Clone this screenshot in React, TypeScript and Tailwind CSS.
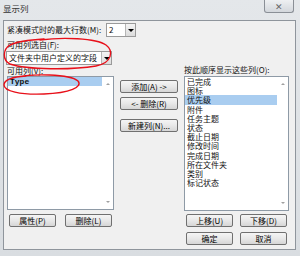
import React from "react";

const leftItems = ["Type"];
const rightItems = [
  "已完成",
  "图标",
  "优先级",
  "附件",
  "任务主题",
  "状态",
  "截止日期",
  "修改时间",
  "完成日期",
  "所在文件夹",
  "类别",
  "标记状态",
];

function Btn({ children, className = "" }: { children: React.ReactNode; className?: string }) {
  return (
    <div
      className={`flex h-[13px] items-center justify-center rounded-[2px] border border-[#707070] bg-linear-to-b from-[#f5f5f5] via-[#e8e8e8] to-[#d6d6d6] text-[8px] leading-none text-black ${className}`}
    >
      {children}
    </div>
  );
}

function Combo({ value, className = "" }: { value: string; className?: string }) {
  return (
    <div className={`flex h-[14px] border border-[#9a9a9a] bg-white ${className}`}>
      <div className="flex flex-1 items-center overflow-hidden whitespace-nowrap pl-[2px] text-[8px] leading-none">
        {value}
      </div>
      <div className="flex w-[10px] items-center justify-center border-l border-[#b5b5b5] bg-linear-to-b from-[#f4f4f4] to-[#dcdcdc]">
        <div className="h-0 w-0 border-x-[3px] border-t-[3px] border-x-transparent border-t-black" />
      </div>
    </div>
  );
}

function ListBox({ items, selected, className = "" }: { items: string[]; selected: number; className?: string }) {
  return (
    <div className={`flex border border-[#8e9aa6] bg-white ${className}`}>
      <div className="flex flex-1 flex-col">
        {items.map((it, i) => (
          <div
            key={it}
            className={`h-[9.2px] overflow-hidden whitespace-nowrap pl-[2px] text-[8px] leading-[9.2px] ${
              i === selected ? "bg-[#a9cdf0]" : ""
            } ${it === "Type" ? "font-['Liberation_Mono',monospace] font-bold" : ""}`}
          >
            {it}
          </div>
        ))}
      </div>
      <div className="flex w-[11px] flex-col items-center justify-between py-[6px]">
        <div className="h-0 w-0 border-x-[2px] border-b-[2px] border-x-transparent border-b-[#a0a0a0]" />
        <div className="h-0 w-0 border-x-[2px] border-t-[2px] border-x-transparent border-t-[#a0a0a0]" />
      </div>
    </div>
  );
}

export default function App() {
  return (
    <div className="relative h-[256px] w-[300px] overflow-hidden bg-linear-to-b from-[#e4e7ea] to-[#d9dde1] font-['Noto_Sans_CJK_SC',sans-serif] text-[#111]">
      {/* title bar */}
      <div className="flex h-[20px] items-start justify-between">
        <div className="pl-[3px] pt-[4px] text-[8.5px] leading-none text-[#333]">显示列</div>
        <div className="mr-[6px] flex h-[13px] w-[30px] items-center justify-center rounded-b-[3px] border border-t-0 border-[#8a8f96] bg-linear-to-b from-[#eef0f2] to-[#d3d7dc] text-[9px] leading-none text-[#666]">
          ✕
        </div>
      </div>

      {/* client area */}
      <div className="ml-[3px] mr-[4px] flex h-[230px] flex-col border border-[#8f959c] bg-[#f0f0f0] text-[8px] leading-none">
        <div className="mt-[2px] flex h-[14px] items-center pl-[3px]">
          <span className="w-[99px] whitespace-nowrap">紧凑模式时的最大行数(M):</span>
          <Combo value="2" className="w-[30px]" />
        </div>
        <div className="mt-[4px] h-[9px] pl-[3px]">可用列选自(F):</div>
        <Combo value="文件夹中用户定义的字段" className="ml-[2px] mt-[1px] w-[106px]" />

        <div className="mt-[1px] flex flex-1 pl-[3px]">
          {/* left column */}
          <div className="flex w-[107px] flex-col">
            <div className="h-[10px] pt-[1px]">可用列(V):</div>
            <ListBox items={leftItems} selected={0} className="h-[134px]" />
            <div className="mt-[4px] flex gap-[9px] pl-[2px]">
              <Btn className="w-[47px]">属性(P)</Btn>
              <Btn className="w-[47px]">删除(L)</Btn>
            </div>
          </div>

          {/* middle buttons */}
          <div className="ml-[6px] flex w-[58px] flex-col pt-[14px]">
            <Btn>添加(A) -&gt;</Btn>
            <Btn className="mt-[4px]">&lt;- 删除(R)</Btn>
            <Btn className="mt-[9px]">新建列(N)...</Btn>
          </div>

          {/* right column */}
          <div className="ml-[6px] flex w-[105px] flex-col">
            <div className="h-[10px] whitespace-nowrap">按此顺序显示这些列(O):</div>
            <ListBox items={rightItems} selected={2} className="h-[135px]" />
            <div className="mt-[3px] flex gap-[7px] pl-[2px]">
              <Btn className="w-[47px]">上移(U)</Btn>
              <Btn className="w-[47px]">下移(D)</Btn>
            </div>
            <div className="mt-[5px] flex gap-[7px] pl-[2px]">
              <Btn className="w-[47px]">确定</Btn>
              <Btn className="w-[47px]">取消</Btn>
            </div>
          </div>
        </div>
      </div>

      {/* red hand-drawn annotations */}
      <svg className="pointer-events-none absolute left-0 top-0" width="300" height="256" viewBox="0 0 300 256" fill="none">
        <path
          d="M40 40 C62 37 96 38 106 45 C114 51 112 63 96 66 C72 70 28 70 10 64 C2 60 3 49 10 45 C18 41 28 40 44 39"
          stroke="#e8101a"
          strokeWidth="1.4"
          strokeLinecap="round"
        />
        <path
          d="M12 78 C32 73 70 74 78 81 C83 87 70 93 44 94 C20 95 4 91 4 85 C4 80 12 77 26 76"
          stroke="#e8101a"
          strokeWidth="1.4"
          strokeLinecap="round"
        />
      </svg>
    </div>
  );
}
